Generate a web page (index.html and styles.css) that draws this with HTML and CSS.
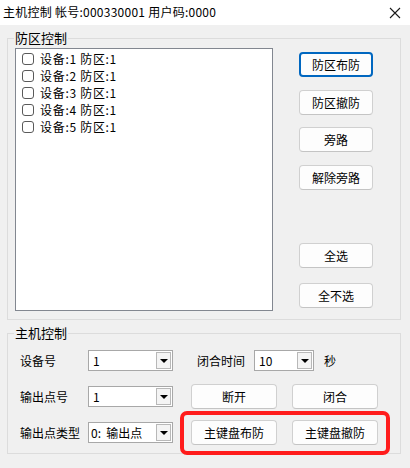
FILE: index.html
```html
<!DOCTYPE html>
<html lang="zh">
<head>
<meta charset="utf-8">
<link rel="stylesheet" href="styles.css">
</head>
<body>
<div class="window">
  <div class="titlebar">
    <span class="title">主机控制 帐号:000330001 用户码:0000</span>
    <svg class="close" width="12" height="12" viewBox="0 0 12 12"><path d="M1 1 L11 11 M11 1 L1 11" stroke="#1a1a1a" stroke-width="1.1" fill="none"/></svg>
  </div>
  <div class="content">
    <fieldset class="group group-zone">
      <legend>防区控制</legend>
      <div class="zone-body">
        <div class="listbox">
          <label class="item"><span class="cb"></span>设备:1 防区:1</label>
          <label class="item"><span class="cb"></span>设备:2 防区:1</label>
          <label class="item"><span class="cb"></span>设备:3 防区:1</label>
          <label class="item"><span class="cb"></span>设备:4 防区:1</label>
          <label class="item"><span class="cb"></span>设备:5 防区:1</label>
        </div>
        <div class="btn-col">
          <div class="btn-set top-set">
            <button class="btn focused">防区布防</button>
            <button class="btn">防区撤防</button>
            <button class="btn">旁路</button>
            <button class="btn">解除旁路</button>
          </div>
          <div class="btn-set bottom-set">
            <button class="btn">全选</button>
            <button class="btn">全不选</button>
          </div>
        </div>
      </div>
    </fieldset>
    <fieldset class="group group-host">
      <legend>主机控制</legend>
      <div class="rows">
        <div class="row">
          <span class="lbl">设备号</span>
          <div class="combo w85"><span class="val">1</span><span class="arrow"></span></div>
          <span class="lbl2">闭合时间</span>
          <div class="combo w60"><span class="val">10</span><span class="arrow"></span></div>
          <span class="unit">秒</span>
        </div>
        <div class="row">
          <span class="lbl">输出点号</span>
          <div class="combo w85"><span class="val">1</span><span class="arrow"></span></div>
          <div class="btn-pair">
            <button class="btn wide">断开</button>
            <button class="btn wide">闭合</button>
          </div>
        </div>
        <div class="row">
          <span class="lbl">输出点类型</span>
          <div class="combo w85"><span class="val val-type">0:&nbsp; 输出点</span><span class="arrow"></span></div>
          <div class="btn-pair highlighted">
            <button class="btn wide">主键盘布防</button>
            <button class="btn wide">主键盘撤防</button>
            <span class="mark"></span>
          </div>
        </div>
      </div>
    </fieldset>
  </div>
</div>
</body>
</html>
```

FILE: styles.css
```css
* { box-sizing: border-box; }
html, body { margin: 0; padding: 0; }
body {
  width: 410px;
  height: 468px;
  overflow: hidden;
  font-family: "Noto Sans CJK SC", "Noto Sans", sans-serif;
  font-size: 12px;
  color: #000;
}
.window {
  width: 410px;
  height: 468px;
  background: #f0f0f0;
  display: flex;
  flex-direction: column;
}
.titlebar {
  height: 25px;
  background: #fff;
  display: flex;
  align-items: center;
  justify-content: space-between;
  padding: 0 9px 0 3px;
}
.title { font-size: 12px; line-height: 1; margin-top: -2px; letter-spacing: 0.25px; }
.close { margin-top: 1px; }
.content {
  padding: 6px 9px 0 7px;
  display: flex;
  flex-direction: column;
  gap: 6px;
}
.group {
  margin: 0;
  border: 1px solid #dcdcdc;
  padding: 0;
  min-width: 0;
}
.group legend {
  padding: 0 1px;
  margin-left: 6px;
  font-size: 13px;
  line-height: 14px;
}
.group-zone { height: 289px; }
.zone-body {
  display: flex;
  padding: 3px 0 0 7px;
}
.listbox {
  width: 258px;
  height: 263px;
  background: #fff;
  border: 1px solid #828790;
  padding: 1px 0 0 6px;
  display: flex;
  flex-direction: column;
}
.item {
  display: flex;
  align-items: center;
  height: 17px;
  gap: 6px;
  font-size: 12px;
  letter-spacing: 0.7px;
}
.cb {
  width: 12px;
  height: 12px;
  border: 1px solid #5a5a5a;
  border-radius: 3px;
  background: #fff;
}
.btn-col {
  display: flex;
  flex-direction: column;
  margin-left: 26px;
  padding-top: 4px;
}
.btn-set { display: flex; flex-direction: column; }
.top-set { gap: 12.7px; }
.bottom-set { gap: 15px; margin-top: 53px; }
.btn {
  width: 74px;
  height: 25px;
  font-family: inherit;
  font-size: 12px;
  background: #fdfdfd;
  border: 1px solid #d0d0d0;
  border-bottom-color: #c4c4c4;
  border-radius: 4px;
  padding: 0;
  color: #000;
}
.btn.focused {
  border: 2px solid #0067c0;
}
.group-host { height: 128px; }
.rows {
  display: flex;
  flex-direction: column;
  gap: 11px;
  padding-top: 8px;
}
.row {
  display: flex;
  align-items: center;
  height: 25px;
}
.lbl { width: 80px; padding-left: 12px; }
.lbl2 { margin-left: 24px; width: 57px; }
.unit { margin-left: 10px; }
.combo {
  height: 21px;
  background: #fff;
  border: 1px solid #a8a8a8;
  display: flex;
  align-items: center;
  justify-content: space-between;
  padding: 0 1px 0 4px;
}
.w85 { width: 85px; }
.w60 { width: 60px; }
.val { font-size: 12px; white-space: nowrap; }
.val-type { margin-left: -2px; }
.arrow {
  width: 15px;
  height: 17px;
  border: 1px solid #b8b8b8;
  background: #f4f4f4;
  position: relative;
  flex: none;
}
.arrow::after {
  content: "";
  position: absolute;
  left: 3px;
  top: 6px;
  border-left: 4px solid transparent;
  border-right: 4px solid transparent;
  border-top: 4px solid #000;
}
.btn-pair {
  display: flex;
  gap: 15px;
  margin-left: 18px;
}
.btn.wide { width: 86px; }
.highlighted { position: relative; }
.mark {
  position: absolute;
  left: -11px;
  top: -9px;
  right: -12px;
  bottom: -10px;
  border: 4px solid #ff1c1c;
  border-radius: 7px;
  pointer-events: none;
}
```
